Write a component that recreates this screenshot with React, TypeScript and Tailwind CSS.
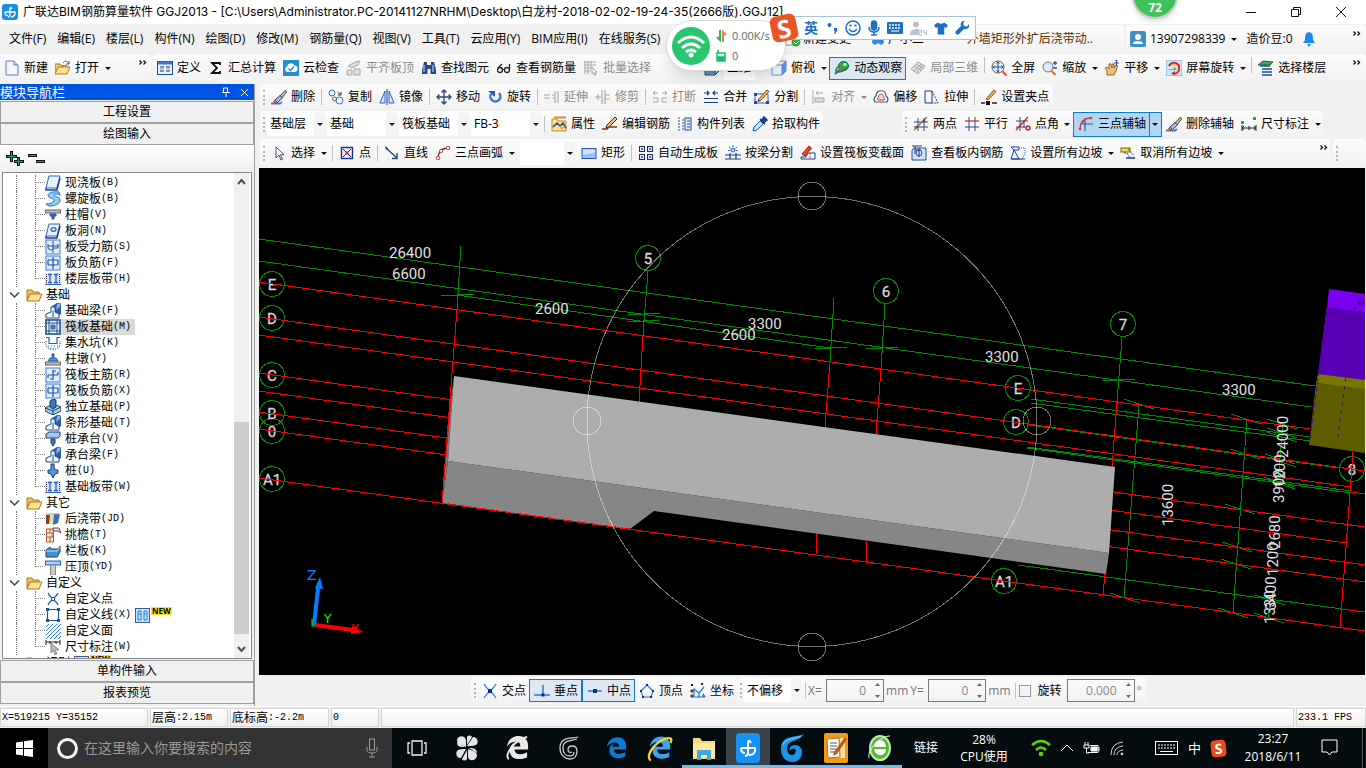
import React, { useState } from "react";
import type { ReactNode } from "react";
import clsx from "clsx";

/* ---------- icons ---------- */

const NAVY = "#1b3f7a";
const BLUE = "#2463c4";
const GREY = "#a8a8a8";

function Svg({ children, size = 16 }: { children: ReactNode; size?: number }) {
    return (
        <svg width={size} height={size} viewBox="0 0 16 16" fill="none" className="shrink-0" aria-hidden="true">
            {children}
        </svg>
    );
}

const eraser = (
    <>
        <path d="M0 14.500h9l2-1.500" stroke="#4a7db5" strokeWidth="2" />
        <path d="M14.500 1 9 7l2 2 4.500-6z" fill="#e8c46a" stroke="#3a4a6a" />
        <path d="m9 6.500-5 4.500 2.500 2.500L11.500 9z" fill="#a9bfe0" stroke="#2a3e6e" />
        <path d="m4 11 2.500 2.500-2.500.5-1.500-1z" fill="#e88" stroke="#a33" />
    </>
);

const rebarBox = (
    <>
        <rect x="1" y="1" width="14" height="14" fill="#e3eefc" stroke="#3a78d0" />
        <path d="M8 2v12M3 5h10M3 10h10M3 5v5M13 5v5" stroke="#1c50a8" strokeWidth="1.200" />
    </>
);

const beam = (
    <>
        <path d="M7 3 12 0h4v11l-4 3z" fill="#2c5e98" />
        <path d="M12 1 16 0 15 4l-4 3z" fill="#7db4e6" />
        <path d="M6 4h4v5l4 2v4H1v-4l5-2z" fill="#f2f8ff" stroke="#1d4f88" />
        <path d="M8 8v6" stroke="#1d4f88" />
    </>
);

const strip = (
    <>
        <rect y="2" width="16" height="11" fill="#dbe8fb" />
        <path d="M0 13.500h16" stroke="#2460c8" />
        <path d="M1.500 3v9M14.500 3v9" stroke="#223" strokeDasharray="1 1" />
        <path d="M3 3.500h4M9 3.500h4M5 3.500v8M11 3.500v8M3 11.500h4M9 11.500h4" stroke="#2460c8" strokeWidth="1.300" />
    </>
);

const slab = (
    <>
        <path d="M4 1h11l-3 12H1z" fill="#e7f2ff" stroke="#2c62c0" />
        <path d="M1 13v2h11l3-12" stroke="#1b3f8a" strokeWidth="1.500" />
    </>
);

const ICONS: Record<string, ReactNode> = {
    newFile: <><path d="M2 1h8l4 4v10H2z" fill="#f4f8fe" stroke="#5c7fae" /><path d="M10 1v4h4" fill="#c7d9f0" stroke="#5c7fae" /></>,
    open: <><path d="M0 14V4h5l1 1.500h6V8" fill="#f5c95c" stroke="#a87a22" /><path d="m0 14 3-7h12l-3 7z" fill="#ffe08a" stroke="#a87a22" /><path d="M8 3c2-3 5-2 6 1M14 1v3h-3" stroke="#3c6fae" /></>,
    define: <><rect x=".5" y="1.500" width="15" height="13" fill="#eaf2fd" stroke="#1c4fa0" /><path d="M1 3h14" stroke="#3b76d0" strokeWidth="3" /><path d="M3 7h4M9 7h4M3 11h4M9 11h4" stroke="#234" /><path d="M3 9h4M9 9h4" stroke="#8ab" /></>,
    sigma: <path d="M12 5V3H4l5 5-5 5h8v-2" stroke="#111" strokeWidth="1.800" />,
    cloud: <><rect width="16" height="16" fill="#1f8fd6" /><path d="M4 12a3 3 0 0 1 0-5.500 4 4 0 0 1 7.500-1A3.300 3.300 0 0 1 12 12z" fill="#fff" /><path d="m5.500 8.500 2 2 3.500-4" stroke="#1f8fd6" strokeWidth="1.500" /></>,
    alignTop: <><path d="M2 6 9 2l5-1-2 4-6 3zM1 10h5v5H1zM8 9h6v6H8z" fill="#ddd" stroke={GREY} /></>,
    find: <><path d="M3 2h3v3h4V2h3l2 8v4H9.500V9h-3v5H1v-4z" fill="#274a86" /><path d="M3 5v7M12 5v7" stroke="#8fb2e6" strokeWidth="1.500" /></>,
    glasses: <><circle cx="4" cy="10" r="2.500" stroke="#222" strokeWidth="1.300" /><circle cx="11" cy="10" r="2.500" stroke="#222" strokeWidth="1.300" /><path d="M6.500 9.500h2M2 8l4-4M13.500 10V4" stroke="#222" strokeWidth="1.200" /></>,
    batch: <><path d="M1 2h12M1 5h12M1 8h7M1 11h7M2 1v13M5 1v13M8 1v8" stroke={GREY} /><path d="m9 7 5 5-2 .3 1 2.500-1.500.5-1-2.500L9 14z" fill="#eee" stroke={GREY} /></>,
    cube: <><path d="m1 5 4-4h10v10l-4 4H1z" fill="#8db4e2" stroke={NAVY} /><path d="M1 5h10v10M11 5l4-4" stroke={NAVY} /><path d="M2 6h8v8H2z" fill="#5c8fd0" /></>,
    cubeTop: <><path d="m1 5 4-4h10v10l-4 4H1z" fill="#f0f6ff" stroke="#6b8cbd" /><path d="M1 5h10v10M11 5l4-4" stroke="#6b8cbd" /><path d="M11 5 15 1v10l-4 4z" fill="#5b93dc" /></>,
    orbit: <><ellipse cx="9.500" cy="6" rx="5" ry="4.500" fill="#2fa84f" stroke="#14692c" /><ellipse cx="11" cy="4.500" rx="2" ry="1.500" fill="#b8f0c2" /><path d="m1 14 4-4" stroke="#2a64c8" strokeWidth="2" /><path d="M5 6c-4 3-4 6-1 6s6-1 9-4" stroke="#1b7d36" strokeWidth="1.500" /><path d="m4 9 2-1 2 2-2 2z" fill="#e8432c" /></>,
    partial: <><path d="m1 9 7-7 7 4-7 8z" fill="#e2e2e2" stroke={GREY} /><path d="m4 6 7 4M6 4l7 4M4 11l7-7M6 13l7-8" stroke={GREY} /></>,
    full: <><circle cx="7" cy="7" r="6" fill="#e8f0fa" stroke="#555" /><path d="M7 2v10M2 7h10M5.500 3.500 7 2l1.500 1.500M5.500 10.500 7 12l1.500-1.500M3.500 5.500 2 7l1.500 1.500M10.500 5.500 12 7l-1.500 1.500" stroke="#2050a0" /><path d="m11.500 11.500 4 4" stroke="#c85a1c" strokeWidth="2" /></>,
    zoom: <><circle cx="6" cy="7" r="5" fill="#dcebfa" stroke="#777" /><path d="m9.500 11 4 4" stroke="#d8741c" strokeWidth="2" /><path d="M13 1v4M11 3h4M11 8h4" stroke="#2456a8" strokeWidth="1.300" /></>,
    pan: <><path d="M3 15V11L1 8l2-1 2 2V4l1.500-.5L8 8V4h2v4l2-3 1.500 1-1.500 5-2 4z" fill="#e9c078" stroke="#94682a" /><path d="M12.500 0v6M10 3h5M11.500 1l1-1 1 1M11.500 5l1 1 1-1" stroke="#234f96" /></>,
    rotateScreen: <><rect width="16" height="16" fill="#cfe6fa" stroke="#67aee0" /><path d="M3 6a5.500 5.500 0 0 1 10 0v4a5 5 0 0 1-6 3.500" stroke="#e0281c" strokeWidth="2" /><path d="m9 11-4 2.500 4 2z" fill="#e0281c" /><path d="M3 9h4l2-2 2 3H3z" fill="#78b83c" /><circle cx="8" cy="5" r="1.500" fill="#f5d23c" /></>,
    floors: <><path d="M4 3h10M2 6h10M4 9h10M4 12h10M4 15h10" stroke="#1a4f94" strokeWidth="1.500" /><path d="m0 5 5-4 10 1-3 3z" fill="#3fa65a" stroke="#1d6a34" /></>,
    eraser,
    copy: <><circle cx="4" cy="4" r="3" fill="#eef4fb" stroke="#4a6d9a" /><circle cx="11.500" cy="11.500" r="3.500" fill="#eef4fb" stroke="#4a6d9a" /><path d="m9.500 3 3.500 3M13 3v3h-3" stroke="#234" /><circle cx="6.500" cy="10" r="2" stroke="#4a6d9a" /></>,
    mirror: <><path d="M6 2v12H1zM10 2v12h5z" fill="#dfeaf9" stroke={BLUE} /><path d="M8 0v16" stroke={NAVY} /></>,
    move: <path d="M8 1v14M1 8h14M5.500 3.500 8 1l2.500 2.500M5.500 12.500 8 15l2.500-2.500M3.500 5.500 1 8l2.500 2.500M12.500 5.500 15 8l-2.500 2.500" stroke="#27496f" strokeWidth="1.300" />,
    rotate: <><path d="M4 5a5 5 0 1 0 8-1" stroke="#3b78cf" strokeWidth="2.500" /><path d="M1 2h7v6z" fill="#2a5cae" /></>,
    extend: <path d="M0 6h6M0 9h6M8 6h2M8 9h2M11 2v12M14 2v12" stroke={GREY} strokeWidth="1.200" />,
    trim: <path d="M0 8h6M10 6h5M10 10h5M7 1v14M10 1v14M3 5v6" stroke={GREY} strokeWidth="1.200" />,
    breakIt: <path d="M6 4H1M3 2 1 4l2 2M10 4h5M13 2l2 2-2 2M1 9h5v4H1M15 9h-5v4h5" stroke={GREY} />,
    merge: <><path d="M1 4h5M4 2l2 2-2 2M15 4h-5M12 2l-2 2 2 2" stroke="#1b3f7a" strokeWidth="1.200" /><path d="M1 9.500h14M1 13.500h14" stroke="#1b3f7a" /></>,
    split: <><path d="M1 5h13v9H1z" stroke="#2a5cc8" /><path d="M0 4h3v3H0zM0 12h3v3H0zM12 12h3v3h-3z" fill="#1c46b0" /><path d="m4 11 9-10 2 1.500L6 12z" fill="#f2c258" stroke="#7a4a14" /><path d="m4 11-.5 2L6 12" fill="#222" /></>,
    align: <><path d="M2 1v14M4 9h9v4H4z" stroke={GREY} fill="#ddd" /><path d="M12 4H5M7 2 5 4l2 2" stroke={GREY} /></>,
    offset: <><path d="M2 13a4 4 0 0 1 1-6c0-7 10-7 10 0a4 4 0 0 1 1 6z" fill="#fff" stroke="#3b587f" strokeWidth="1.200" /><path d="M5 11a2 2 0 0 1 .5-3c0-4 5-4 5 0a2 2 0 0 1 .5 3z" fill="#fcd7d7" stroke="#c93c3c" /></>,
    stretch: <><path d="M1 2h7v12H1z" stroke="#1b3f7a" /><path d="m8 2 6 12H8" stroke="#27496f" strokeDasharray="2 1" /></>,
    grip: <><path d="M0 14h4M11 14h5" stroke="#222" strokeWidth="1.500" /><rect x="5" y="12" width="4" height="4" fill="#111" /><path d="m5 10 8-9 2 1.500L7 11z" fill="#e8b64c" stroke="#7a5a14" /></>,
    props: <><path d="M1 3h5l1 2h8v10H1z" fill="#fbe09a" stroke="#c48a2a" /><path d="M3 1.500h12" stroke="#e08a2a" strokeWidth="2" /><path d="m2 11 4-4 3 3 3-3 3 5" stroke="#31507c" strokeWidth="1.500" /><path d="m8 10 5 1-2 3z" fill="#e6a038" /></>,
    editBar: <><path d="M0 13h5l2-2h8" stroke="#7a3a10" strokeWidth="1.500" /><path d="m5 9 8-8 2 2-8 8-3 1z" fill="#e6c27a" stroke="#333" /></>,
    list: <><path d="M1 2h3M1 5h3M1 8h3M1 11h3M1 14h3M6 3v11" stroke="#24508e" strokeDasharray="2 1" /><rect x="8" y="2" width="6" height="12" fill="#e8f0fb" stroke="#24508e" /><path d="M10 5h3M10 8h3M10 11h3" stroke="#24508e" /></>,
    picker: <><path d="m1 15 1-4 7-7 3 3-7 7z" fill="#bfe0f7" stroke="#275fae" /><path d="m8 3 5 5M9 5l3-4 3 3-4 3z" stroke="#123a7a" fill="#1d4f9e" strokeWidth="1.500" /></>,
    twoPoint: <><path d="M5 2v13M11 2v13M1 6h14M1 11h14" stroke="#2c4f86" /><path d="M1 14 14 1" stroke="#2f9a3f" strokeWidth="1.300" /><circle cx="4" cy="11" r="1.500" fill="#c22" /><circle cx="11" cy="5" r="1.500" fill="#c22" /></>,
    parallel: <><path d="M5 1v14M11 1v14" stroke="#2c4f86" /><path d="M1 5h14" stroke="#c33" strokeWidth="1.300" /><path d="M1 11h14" stroke="#2c4f86" /></>,
    pointAngle: <><path d="M5 1v14M9 4v8M1 5h12M1 11h9" stroke="#2c4f86" /><path d="M1 14 13 1" stroke="#c22" strokeWidth="1.300" /><circle cx="13" cy="12" r="2" stroke="#c22" strokeWidth="1.500" /></>,
    threeAxis: <><path d="M7 2v13M2 8h13" stroke="#34619e" strokeWidth="1.200" /><path d="M2 14C2 6 6 2 13 2" stroke="#d63a3a" strokeWidth="1.300" /><circle cx="2" cy="13" r="1.300" fill="#d63a3a" /><circle cx="5" cy="5.500" r="1.300" fill="#d63a3a" /><circle cx="13" cy="2" r="1.300" fill="#d63a3a" /></>,
    dim: <><path d="M1 9v6M15 9v6M1 12h14M3 10l-2 2 2 2M13 10l2 2-2 2M8 10v4" stroke="#222" /><rect x="0" y="5" width="3" height="3" fill="#3a9a4a" /><rect x="12" y="1" width="3" height="3" fill="#3a9a4a" /></>,
    select: <path d="M5 2v11l3-3 2 5 1.500-.7-2-4.600H13z" fill="#fff" stroke="#3e556e" />,
    point: <><rect x="2.500" y="2.500" width="11" height="11" stroke="#1b2f8a" strokeWidth="1.400" fill="#eef2ff" /><path d="m4 4 8 8M12 4l-8 8" stroke="#1b2f8a" /><circle cx="8" cy="8" r="1.700" fill="#d33" /></>,
    line: <><path d="m2 3 11 10" stroke="#27496f" strokeWidth="1.400" /><path d="M13 8v5.500H8" stroke="#27496f" strokeWidth="1.400" /><path d="m1 1 3 2-2 2z" fill="#27496f" /></>,
    arc: <><path d="M3 14C3 7 7 3 13 3" stroke="#27496f" strokeWidth="1.400" /><circle cx="3" cy="13" r="1.800" stroke="#d03a2a" fill="#fff" /><circle cx="6" cy="6" r="1.600" stroke="#d03a2a" fill="#fff" /><circle cx="13" cy="3" r="1.800" stroke="#d03a2a" fill="#fff" /></>,
    rect: <><rect x="1" y="3.500" width="14" height="10" fill="#9dc2fa" stroke="#2a55c0" /><path d="M2 4.500h12v3L2 10z" fill="#d3e5ff" /></>,
    autoSlab: <g stroke="#222b52" fill="#dfe9fb"><rect x="1.500" y="1.500" width="5" height="5" /><rect x="9.500" y="1.500" width="5" height="5" /><rect x="1.500" y="9.500" width="5" height="5" /><rect x="9.500" y="9.500" width="5" height="5" /><path d="M4 3v2M12 3v2M4 11v2M12 11v2" stroke="#3b78e0" strokeWidth="2" /></g>,
    beamSplit: <><path d="M0 10h5M11 10h5M0 14h16M5 8v6M11 8v6M5 10h6" stroke="#1b3f8a" strokeWidth="1.200" /><circle cx="8" cy="5" r="2" fill="#bcd4f7" stroke={BLUE} /><path d="M8 0v2M4 2l1.500 1M12 2l-1.500 1M3 5.500h2M11 5.500h2" stroke={BLUE} /></>,
    varSection: <><path d="M1 12h5l2-4h7v6H1z" stroke="#1b3f8a" fill="#fff" /><path d="m2 9 7-8 2.500 2L5 11z" fill="#e8432c" stroke="#a3200f" /><path d="M10 8v6" stroke="#d33" strokeDasharray="2 1" /></>,
    viewSlab: <><path d="M3 3h12v12H1V5z" fill="#cfe2fb" stroke="#27508e" /><path d="M1 1h10M4 1v8M4 5h6M8 3v9" stroke="#1b3f7a" /><circle cx="8" cy="8" r="3" stroke="#27508e" /></>,
    setSlope: <><path d="M1 2h8v3H4l5 9H1l3-9z" fill="#f3f8ff" stroke="#1b3fa0" /><path d="M9 3h6v6l-3 5H7" stroke="#2a62c8" strokeDasharray="1 1" /><path d="M1 14h14" stroke="#1b3fa0" /></>,
    clearSlope: <><rect x="1" y="3" width="9" height="4" fill="#f7e04a" stroke="#6e5f14" /><path d="M4 8h3l3 5h5M8 4l6 7" stroke="#27508e" strokeDasharray="2 1" /><path d="M6 13h9" stroke="#1b3fa0" strokeWidth="1.500" /></>,
    cross: <><path d="M2 1c3 6 9 8 12 14M14 1C11 7 5 9 2 15" stroke="#2a78d8" strokeWidth="1.200" /><rect x="6" y="6" width="4" height="4" fill="#0b2f7a" /></>,
    foot: <><path d="M9 2v11" stroke="#2a78d8" strokeWidth="1.500" /><path d="M0 12h16" stroke="#2a78d8" strokeWidth="1.500" /><rect x="7.500" y="10.500" width="3" height="3" fill="#0b2f7a" /></>,
    mid: <><path d="M1 8h14" stroke="#2a78d8" strokeWidth="1.500" /><rect x="6" y="6" width="4" height="4" fill="#0b2f7a" /></>,
    vertex: <><path d="M8 2 14 8l-2 6H4L2 8z" stroke="#2a78d8" strokeWidth="1.200" /><path d="M7 1h2v2H7zM1 7h2v2H1zM13 7h2v2h-2zM3 13h2v2H3zM11 13h2v2h-2z" fill="#0b2f7a" /></>,
    coord: <><path d="M4 5v9h11M4 6l5 4M14 4l-5 6v5" stroke="#2a78d8" strokeWidth="1.200" /><path d="m1 1 2 2M3 1 1 3M11 0l2 2M13 0l-2 2M1 7h2v2H1zM1 12h2v2H1z" stroke="#222" /><path d="m13 10 3 4h-4z" fill="#2a78d8" /></>,

    // tree
    slab,
    spiral: <><path d="M14 1C6 0 1 3 4 6c2 2 6 1 5 4-1 2-5 3-8 3l3 2c6 0 11-2 11-6 0-4-7-3-6-5 .5-1.500 4-1 6 0z" fill="#8fd0f5" stroke="#2470b8" /></>,
    cap: <><rect x=".5" y="3" width="15" height="3" fill="#bbb" stroke="#666" /><path d="M5 7h6v2H5zM7 9h2v3H7z" fill="#4c86d8" stroke="#1c4fa0" /></>,
    hole: <>{slab}<ellipse cx="8.500" cy="6.500" rx="2.500" ry="1.800" stroke="#2c62c0" strokeWidth="1.300" /></>,
    force: <><rect x="1" y="1" width="14" height="14" fill="#e3eefc" stroke="#3a78d0" /><path d="M8 2v12M3 7h10M3 5v4a3 3 0 0 0 5 1M13 5v4H8" stroke="#1c50a8" /></>,
    rebarBox,
    strip,
    beam,
    raft: <><rect x="1" y="1" width="14" height="14" fill="#eef6ff" stroke="#1d4f88" strokeWidth="1.500" /><path d="M4 1v14M12 1v14M1 4h14M1 12h14M6 6h4v4H6zM8 6v4M6 8h4" stroke="#1d4f88" /></>,
    pit: <><path d="M1 2.500h3v6h8v-6h3" stroke={BLUE} strokeWidth="1.200" /><path d="M1 6v4c2 6 12 6 14 0V6" stroke={BLUE} strokeDasharray="1 1.500" strokeWidth="1.300" /><path d="M3 11h10M5 13h6" stroke={BLUE} strokeDasharray="1 2" /></>,
    pier: <><path d="M7 3h2v3H7zM5 7h6l2 3H3z" fill="#5b93dc" stroke="#1c4fa0" /><rect x=".5" y="11" width="15" height="3" fill="#bbb" stroke="#666" /></>,
    mainBar: <><rect x="1" y="1" width="14" height="14" fill="#e3eefc" stroke="#3a78d0" /><path d="M8 3v10M3 8h10M3 8v3M13 8V5M5 12h3M8 4h3" stroke="#1c50a8" strokeWidth="1.200" /></>,
    isolated: <><path d="m0 9 8-4 8 3v4l-8 4-8-4z" fill="#a7cdf0" stroke="#143f74" /><path d="m0 9 8 3 8-4M8 12v4" stroke="#143f74" /><path d="M5 2 8 0l3 1v7l-3 2-3-2z" fill="#3e77b8" stroke="#143f74" /></>,
    cushion: <><path d="m1 3 3-2h11v4l-2 2H1z" fill="#9fc8ee" stroke="#143f74" /><path d="M6 8h4v4l-2 3-2-3z" fill="#3e77b8" stroke="#143f74" /></>,
    pile: <path d="M6 1h3v3l1 3h3v3l-3 1-2 4-2-4-3-1V7h3z" fill="#5b93dc" stroke="#143f74" />,
    postCast: <><path d="M1 4h5v9H1z" fill="#7a4520" /><path d="M5 4h5l-2 9H4z" fill="#f0d8a8" /><path d="M9 3h6l-2 9-5 2z" fill="#3a6ec4" /><path d="M1 3h13" stroke="#999" /></>,
    eave: <><path d="M1.500 2h7v13h-7zM2 6h7M2 10h7M5 2v4M7 6v4M5 10v5" stroke="#b8582c" fill="#fdebdc" /><path d="M8 1h6l2 5-3-2H8z" fill="#ddd" stroke="#6a4a3a" /></>,
    rail: <><path d="m1 7 4-3 1 2h7l2-3v6l-3 5H1z" fill="#4c8fd0" stroke="#143f74" /><path d="M1 8h11l3-4" stroke="#bfe0f7" /></>,
    coping: <><rect x=".5" y="2" width="15" height="4" fill="#a9ccf5" stroke="#2463c4" /><rect x="5.500" y="6" width="5" height="10" fill="#ccc" stroke="#888" /></>,
    userPoint: <><path d="M3 2c2 5 8 7 10 12M13 2C11 7 5 9 3 14" stroke="#1c50a8" strokeWidth="1.200" /><rect x="6.500" y="6.500" width="3" height="3" fill="#fff" stroke="#1c50a8" /></>,
    userLine: <><rect x="2.500" y="2.500" width="11" height="11" stroke="#1c50a8" /><path d="M1 1h3v3H1zM12 1h3v3h-3zM1 12h3v3H1zM12 12h3v3h-3z" fill="#1c50a8" /></>,
    userFace: <path d="m1 4 3-3M1 8l7-7M1 12 12 1M1 16 16 1M5 16 16 5M9 16l7-7M13 16l3-3" stroke="#3b78e0" />,
    userDim: <><path d="M1 1v5M15 1v5M1 3h14M5 2v3M11 2v3" stroke="#222" /><path d="M6 4v10l2.500-2.500L10 16l2-1-2-4h4z" fill="#bbb" stroke="#888" /></>,
    folder: <><path d="M1 14V3h5l1 2h6v3" fill="#f0c25a" stroke="#a87a22" /><path d="m1 14 3-7h12l-3 7z" fill="#ffe39a" stroke="#a87a22" /></>,
};

const Icon = ({ name }: { name: string }) => <Svg>{ICONS[name]}</Svg>;

const Caret = ({ muted }: { muted?: boolean }) => (
    <svg width="6" height="3" viewBox="0 0 6 3" aria-hidden="true">
        <path d="M0 0h6L3 3z" fill={muted ? "#888" : "#111"} />
    </svg>
);

/* ---------- toolbar parts ---------- */

type ToolItem = { icon: string; label: string; arrow?: boolean; off?: boolean; on?: boolean };

function Tool({ icon, label, arrow, off, on }: ToolItem) {
    return (
        <button
            type="button"
            disabled={off}
            className={clsx(
                "flex h-[23px] shrink-0 items-center whitespace-nowrap",
                on && "border border-[#1079d0] bg-[#dce9f5]",
                off && "text-[#8c8c8c]"
            )}
        >
            <span className="flex items-center gap-1 pl-1 pr-[3px]">
                <Icon name={icon} />
                {label}
            </span>
            {arrow && (
                <span className="flex w-[11px] justify-center">
                    <Caret muted={off} />
                </span>
            )}
        </button>
    );
}

const Sep = () => (
    <span className="flex w-[6px] shrink-0 justify-center">
        <span className="h-4 w-px bg-[#c0c0c0]" />
    </span>
);

const Grip = () => <span className="mr-[2px] ml-[3px] h-[15px] shrink-0 border-l-2 border-dotted border-[#b4b4b4]" />;

function Tools({ items }: { items: (ToolItem | "|")[] }) {
    return <>{items.map((it, i) => (it === "|" ? <Sep key={i} /> : <Tool key={i} {...it} />))}</>;
}

function Band({ children, className }: { children?: ReactNode; className?: string }) {
    return (
        <div className={clsx("flex items-center rounded-sm bg-linear-to-b from-[#fcfcfc] to-[#f1f1f1]", className)}>
            {children}
        </div>
    );
}

function Combo({ label, value, className }: { label: string; value: string; className: string }) {
    return (
        <span className={clsx("relative flex h-[23px] shrink-0 bg-white", className)}>
            <select aria-label={label} defaultValue={value} className="w-full appearance-none bg-transparent pl-[3px] outline-none">
                <option>{value}</option>
            </select>
            <span className="pointer-events-none absolute inset-y-0 right-0 flex w-[11px] items-center justify-center bg-[#f4f4f4]">
                <Caret />
            </span>
        </span>
    );
}

function More() {
    return (
        <button type="button" aria-label="更多" className="flex h-4 w-3 shrink-0 items-center justify-center self-start">
            <svg width="8" height="5" viewBox="0 0 8 5" fill="none">
                <path d="m.5.5 2 2-2 2M4.500.5l2 2-2 2" stroke="#111" strokeWidth="1.300" />
            </svg>
        </button>
    );
}

const MENUS = ["文件(F)", "编辑(E)", "楼层(L)", "构件(N)", "绘图(D)", "修改(M)", "钢筋量(Q)", "视图(V)", "工具(T)", "云应用(Y)", "BIM应用(I)", "在线服务(S)"];

const MAIN_TOOLS: (ToolItem | "|")[] = [
    { icon: "define", label: "定义" },
    { icon: "sigma", label: "汇总计算" },
    { icon: "cloud", label: "云检查" },
    { icon: "alignTop", label: "平齐板顶", off: true },
    { icon: "find", label: "查找图元" },
    { icon: "glasses", label: "查看钢筋量" },
    { icon: "batch", label: "批量选择", off: true },
];

const VIEW_TOOLS: (ToolItem | "|")[] = [
    { icon: "cubeTop", label: "俯视", arrow: true },
    { icon: "orbit", label: "动态观察", on: true },
    { icon: "partial", label: "局部三维", off: true },
    "|",
    { icon: "full", label: "全屏" },
    { icon: "zoom", label: "缩放", arrow: true },
    { icon: "pan", label: "平移", arrow: true },
    { icon: "rotateScreen", label: "屏幕旋转", arrow: true },
    "|",
    { icon: "floors", label: "选择楼层" },
];

const EDIT_TOOLS: (ToolItem | "|")[] = [
    { icon: "eraser", label: "删除" },
    "|",
    { icon: "copy", label: "复制" },
    { icon: "mirror", label: "镜像" },
    "|",
    { icon: "move", label: "移动" },
    { icon: "rotate", label: "旋转" },
    "|",
    { icon: "extend", label: "延伸", off: true },
    { icon: "trim", label: "修剪", off: true },
    "|",
    { icon: "breakIt", label: "打断", off: true },
    { icon: "merge", label: "合并" },
    { icon: "split", label: "分割" },
    "|",
    { icon: "align", label: "对齐", arrow: true, off: true },
    { icon: "offset", label: "偏移" },
    { icon: "stretch", label: "拉伸" },
    "|",
    { icon: "grip", label: "设置夹点" },
];

const COMPONENT_TOOLS: (ToolItem | "|")[] = [
    { icon: "props", label: "属性" },
    { icon: "editBar", label: "编辑钢筋" },
    { icon: "list", label: "构件列表" },
    { icon: "picker", label: "拾取构件" },
];

const DRAW_TOOLS: (ToolItem | "|")[] = [
    { icon: "select", label: "选择", arrow: true },
    "|",
    { icon: "point", label: "点" },
    "|",
    { icon: "line", label: "直线" },
    { icon: "arc", label: "三点画弧", arrow: true },
];

const SLAB_TOOLS: (ToolItem | "|")[] = [
    { icon: "rect", label: "矩形" },
    "|",
    { icon: "autoSlab", label: "自动生成板" },
    { icon: "beamSplit", label: "按梁分割" },
    { icon: "varSection", label: "设置筏板变截面" },
    { icon: "viewSlab", label: "查看板内钢筋" },
    { icon: "setSlope", label: "设置所有边坡", arrow: true },
    { icon: "clearSlope", label: "取消所有边坡", arrow: true },
];

/* ---------- left navigation ---------- */

type Leaf = { icon: string; name: string; hotkey?: string; isNew?: boolean };
type Group = { name?: string; items: Leaf[] };

const TREE: Group[] = [
    {
        items: [
            { icon: "slab", name: "现浇板", hotkey: "(B)" },
            { icon: "spiral", name: "螺旋板", hotkey: "(B)" },
            { icon: "cap", name: "柱帽", hotkey: "(V)" },
            { icon: "hole", name: "板洞", hotkey: "(N)" },
            { icon: "force", name: "板受力筋", hotkey: "(S)" },
            { icon: "rebarBox", name: "板负筋", hotkey: "(F)" },
            { icon: "strip", name: "楼层板带", hotkey: "(H)" },
        ],
    },
    {
        name: "基础",
        items: [
            { icon: "beam", name: "基础梁", hotkey: "(F)" },
            { icon: "raft", name: "筏板基础", hotkey: "(M)" },
            { icon: "pit", name: "集水坑", hotkey: "(K)" },
            { icon: "pier", name: "柱墩", hotkey: "(Y)" },
            { icon: "mainBar", name: "筏板主筋", hotkey: "(R)" },
            { icon: "rebarBox", name: "筏板负筋", hotkey: "(X)" },
            { icon: "isolated", name: "独立基础", hotkey: "(P)" },
            { icon: "beam", name: "条形基础", hotkey: "(T)" },
            { icon: "cushion", name: "桩承台", hotkey: "(V)" },
            { icon: "beam", name: "承台梁", hotkey: "(F)" },
            { icon: "pile", name: "桩", hotkey: "(U)" },
            { icon: "strip", name: "基础板带", hotkey: "(W)" },
        ],
    },
    {
        name: "其它",
        items: [
            { icon: "postCast", name: "后浇带", hotkey: "(JD)" },
            { icon: "eave", name: "挑檐", hotkey: "(T)" },
            { icon: "rail", name: "栏板", hotkey: "(K)" },
            { icon: "coping", name: "压顶", hotkey: "(YD)" },
        ],
    },
    {
        name: "自定义",
        items: [
            { icon: "userPoint", name: "自定义点" },
            { icon: "userLine", name: "自定义线", hotkey: "(X)", isNew: true },
            { icon: "userFace", name: "自定义面" },
            { icon: "userDim", name: "尺寸标注", hotkey: "(W)" },
        ],
    },
];

const NewBadge = () => (
    <>
        <svg width="15" height="15" viewBox="0 0 15 15" fill="none" className="shrink-0">
            <rect x=".5" y=".5" width="14" height="14" fill="#cde4fb" stroke="#3f5f86" />
            <path d="M3 3h3v9H3zM9 3h3v9H9zM3 6h3M9 6h3" stroke="#1f7ad8" />
        </svg>
        <span className="mb-2 ml-px bg-[#ffe11a] px-px text-[8px] font-bold leading-[8px] text-black">NEW</span>
    </>
);

function TreeLeaf({ leaf, last, active, onPick }: { leaf: Leaf; last: boolean; active: boolean; onPick: () => void }) {
    return (
        <li className="flex h-4 items-center pl-[13px]">
            <span className="h-4 w-[19px] border-l border-dotted border-[#808080]" />
            <span className={clsx("flex w-[10px] items-start border-l border-dotted border-[#808080]", last ? "h-2 self-start" : "h-4")}>
                <span className="h-2 w-full border-b border-dotted border-[#808080]" />
            </span>
            <button type="button" onClick={onPick} className={clsx("flex h-4 items-center pr-1", active && "bg-[#d9d9d9]")}>
                <Icon name={leaf.icon} />
                <span className="ml-1">{leaf.name}</span>
                {leaf.hotkey && <span className="font-['Liberation_Mono'] text-[10px]">{leaf.hotkey}</span>}
            </button>
            {leaf.isNew && <NewBadge />}
        </li>
    );
}

function FolderRow({ name, isNew }: { name: string; isNew?: boolean }) {
    return (
        <div className="flex h-4 items-center pl-[6px]">
            <svg width="11" height="8" viewBox="0 0 11 8" fill="none">
                <path d="m1 1.500 4.500 4.500L10 1.500" stroke="#404040" strokeWidth="1.500" />
            </svg>
            <span className="w-[6px]" />
            <Icon name="folder" />
            <span className="ml-1">{name}</span>
            {isNew && <span className="flex items-center pl-1"><NewBadge /></span>}
        </div>
    );
}

const PanelButton = ({ children }: { children: ReactNode }) => (
    <button type="button" className="block h-[22px] w-full border border-[#a0a0a0] bg-[#f0f0f0] text-center">
        {children}
    </button>
);

function NavPanel() {
    const [active, setActive] = useState("筏板基础");
    return (
        <aside className="flex w-[255px] shrink-0 flex-col border-r border-[#a0a0a0] bg-[#f0f0f0]">
            <div className="flex h-4 shrink-0 items-center bg-[#0054e3] text-white">
                <span className="flex-1 text-[13px] leading-4">模块导航栏</span>
                <button type="button" aria-label="固定" className="mr-[9px]">
                    <svg width="10" height="10" viewBox="0 0 10 10" fill="none" stroke="#fff">
                        <path d="M2.500 5.500V1h4v4.500M1 5.500h8M5 6v4M6.500 1v4.500" />
                    </svg>
                </button>
                <button type="button" aria-label="关闭" className="mr-[5px]">
                    <svg width="9" height="9" viewBox="0 0 9 9" stroke="#fff"><path d="m1 1 7 7M8 1 1 8" /></svg>
                </button>
            </div>
            <div className="pt-px">
                <PanelButton>工程设置</PanelButton>
                <PanelButton>绘图输入</PanelButton>
            </div>
            <div className="flex h-[27px] shrink-0 items-center gap-1 bg-linear-to-b from-white to-[#f0f0f0] pl-[6px]">
                <button type="button" aria-label="全部展开">
                    <svg width="18" height="15" viewBox="0 0 18 15">
                        <path d="M4 0h3v4h4v3H7v4H4V7H0V4h4zM11 6h3v3h4v3h-4v3h-3v-3H8V9h3z" fill="#111" />
                        <path d="M5 1h1v9H5zM1 5h9v1H1zM12 7h1v7h-1zM9 10h8v1H9z" fill="#17a67e" />
                    </svg>
                </button>
                <button type="button" aria-label="全部折叠">
                    <svg width="17" height="15" viewBox="0 0 17 15">
                        <path d="M0 3h9v3H0zM8 9h9v3H8z" fill="#111" />
                        <path d="M1 4h7v1H1zM9 10h7v1H9z" fill="#17a67e" />
                    </svg>
                </button>
            </div>
            <div className="mx-[2px] flex min-h-0 grow basis-[487px] overflow-hidden border border-[#828790] bg-white pr-[2px]">
                <div className="h-0 min-h-full flex-1 overflow-hidden pt-[2px]">
                    {TREE.map((g, gi) => (
                        <section key={gi}>
                            {g.name && <FolderRow name={g.name} />}
                            <ul>
                                {g.items.map((leaf, i) => (
                                    <TreeLeaf
                                        key={leaf.name}
                                        leaf={leaf}
                                        last={i === g.items.length - 1}
                                        active={active === leaf.name}
                                        onPick={() => setActive(leaf.name)}
                                    />
                                ))}
                            </ul>
                        </section>
                    ))}
                    <FolderRow name="识别" isNew />
                </div>
                <div className="flex w-[15px] flex-col items-center bg-[#f0f0f0]">
                    <svg width="15" height="18" viewBox="0 0 15 18" fill="none"><path d="m4 11 3.500-4 3.500 4" stroke="#505050" strokeWidth="2" /></svg>
                    <span className="flex-[232]" />
                    <span className="w-full flex-[212] bg-[#cdcdcd]" />
                    <svg width="15" height="24" viewBox="0 0 15 24" fill="none"><path d="m4 13 3.500 4 3.500-4" stroke="#505050" strokeWidth="2" /></svg>
                </div>
            </div>
            <div className="shrink-0 pb-[2px] pt-px">
                <PanelButton>单构件输入</PanelButton>
                <PanelButton>报表预览</PanelButton>
            </div>
        </aside>
    );
}

/* ---------- 3D view ---------- */

const GREEN = "#008c00";

const GREEN_LINES = [
    [259, 239, 1315, 386], [259, 261, 1311, 407], [457, 295, 830, 348],
    [461, 246, 457, 309], [648, 271, 643, 335], [834, 298, 830, 361], [885, 304, 881, 369], [1122, 338, 1117, 402],
    [1139, 404, 1124, 598], [1247, 419, 1233, 613], [1283, 425, 1278, 480], [1270, 600, 1268, 618],
    [1031, 399, 1310, 437], [1031, 403, 1310, 441], [1030, 425, 1339, 468],
    [1027, 447, 1351, 491], [1027, 448, 1351, 493], [1018, 565, 1342, 609],
];

const RED_LINES = [
    [259, 282, 1310, 429], [259, 317, 1365, 471], [259, 335, 1351, 487], [259, 373, 1365, 527],
    [259, 391, 1346, 543], [259, 412, 1365, 565], [259, 429, 1365, 582], [259, 478, 1365, 631],
    [457, 309, 442, 503], [643, 335, 639, 402], [830, 361, 825, 428], [881, 369, 876, 435],
    [1117, 402, 1112, 468], [1105, 573, 1103, 595], [1353, 452, 1340, 628],
    [817, 533, 816, 555], [867, 541, 866, 562], [1342, 609, 1365, 612], [1351, 492, 1365, 494],
];

// tick centres of the steep and of the flat dimension strings
const STEEP_TICKS = [
    [1139, 404], [1246, 419], [1245, 454], [1240, 509], [1237, 547], [1236, 564], [1125, 598], [1233, 613],
    [1270, 600], [1269, 618], [1282, 424], [1282, 433], [1282, 437], [1280, 459], [1281, 462], [1279, 482], [1280, 484],
];
const FLAT_TICKS = [[457, 295], [644, 314], [643, 321], [831, 348], [882, 348], [1119, 380]];

const AXIS_MARKS: [number, number, string][] = [
    [272, 284, "E"], [272, 318, "D"], [272, 375, "C"], [272, 413, "B"], [272, 431, "0"], [272, 479, "A1"],
    [648, 258, "5"], [886, 291, "6"], [1123, 324, "7"], [1018, 388, "E"], [1016, 422, "D"], [1004, 581, "A1"], [1352, 469, "8"],
];

const DIMS: [number, number, string][] = [
    [389, 258, "26400"], [392, 279, "6600"], [535, 314, "2600"], [748, 329, "3300"], [722, 340, "2600"],
    [985, 362, "3300"], [1222, 395, "3300"],
];
const SIDE_DIMS: [number, number, string][] = [
    [1173, 526, "13600"], [1288, 458, "24000"], [1284, 503, "3900"], [1285, 488, "1200"],
    [1280, 549, "2680"], [1278, 576, "1200"], [1276, 610, "3400"], [1275, 624, "1330"],
];

function ModelView() {
    return (
        <svg viewBox="259 168 1106 507" preserveAspectRatio="xMidYMid slice" className="h-full w-full bg-black" fontFamily="Roboto, sans-serif" fontSize="15" role="img" aria-label="三维视图">
            <g stroke={GREEN} fill="none" shapeRendering="crispEdges">
                {GREEN_LINES.map(([a, b, c, d], i) => <line key={i} x1={a} y1={b} x2={c} y2={d} />)}
                {STEEP_TICKS.map(([x, y], i) => <line key={i} x1={x - 15} y1={y - 5} x2={x + 15} y2={y + 5} />)}
                {FLAT_TICKS.map(([x, y], i) => <line key={i} x1={x - 16} y1={y + 1} x2={x + 16} y2={y - 1} />)}
                {AXIS_MARKS.map(([x, y], i) => <circle key={i} cx={x} cy={y} r="12.500" />)}
            </g>
            <g fill="#d8d8d8" textAnchor="middle">
                {AXIS_MARKS.map(([x, y, t], i) => <text key={i} x={x} y={y + 6} stroke="#d8d8d8" strokeWidth=".3">{t}</text>)}
            </g>
            <g stroke="#f00" shapeRendering="crispEdges">
                {RED_LINES.map(([a, b, c, d], i) => <line key={i} x1={a} y1={b} x2={c} y2={d} />)}
            </g>

            {/* raft slab */}
            <path d="M454 376 448 461 442 503 451 399z" fill="#777" />
            <path d="m448 461 661 92-3 21-452-63-24 18-188-26z" fill="#868686" />
            <path d="m454 376 661 91-6 86-661-92z" fill="#adadad" />
            <path d="m451 399-9 104 188 26" stroke="#f00" fill="none" strokeDasharray="8 3" shapeRendering="crispEdges" />

            {/* neighbouring block */}
            <path d="m1329 289 36 5v19l-38-5z" fill="#7a00f0" />
            <path d="m1327 307 38 5v69l-47-7z" fill="#5a00b4" />
            <path d="m1318 374 47 6v10l-49-7z" fill="#777700" />
            <path d="m1316 383 49 6v64l-56-8z" fill="#5c5c00" />
            <path d="m1357 299 8 1v6l-8-1z" fill="#5a00b4" />
            <path d="m1355 307-17 130" stroke="#3d0090" strokeDasharray="3 5" />
            <path d="m1327 307-17 135" stroke="#5a00b4" strokeDasharray="5 3" />

            <g fill="#e0e0e0">
                {DIMS.map(([x, y, t], i) => <text key={i} x={x} y={y}>{t}</text>)}
                {SIDE_DIMS.map(([x, y, t], i) => <text key={i} transform={`translate(${x} ${y}) rotate(-90)`}>{t}</text>)}
            </g>

            {/* orbit ring */}
            <g stroke="#fff" strokeOpacity=".45" fill="none" shapeRendering="crispEdges">
                <circle cx="812" cy="421.500" r="225" />
                <circle cx="812" cy="196" r="14" />
                <circle cx="587" cy="421" r="14" />
                <circle cx="1037" cy="421" r="14" />
                <circle cx="812" cy="647" r="14" />
            </g>

            {/* axis tripod */}
            <path d="m314 625 4-37" stroke="#0080ff" strokeWidth="4" />
            <path d="m320 577 3 12-8-1z" fill="#0080ff" />
            <path d="m315 625 38 5" stroke="#f00" strokeWidth="4" />
            <path d="m363 632-11-6-1 8z" fill="#f00" />
            <path d="M312 619v7h3" stroke="#0f0" fill="none" />
            <g fontFamily="'DejaVu Sans', sans-serif" fontSize="14">
                <text x="307" y="580" fill="#0080ff">Z</text>
                <text x="324" y="623" fill="#0f0" fontSize="12">Y</text>
                <text x="351" y="633" fill="#f00" fontSize="12">X</text>
            </g>
        </svg>
    );
}

/* ---------- snap bar ---------- */

function Spin({ id, value, className }: { id: string; value: string; className: string }) {
    return (
        <span className={clsx("relative flex h-[23px] border border-[#7a7a7a]", className)}>
            <input id={id} defaultValue={value} className="w-full bg-transparent pr-[17px] text-right text-[#8a8a8a] outline-none" />
            <svg width="7" height="17" viewBox="0 0 7 17" className="absolute right-[2px] top-[2px]" fill="#666">
                <path d="M1 4h5L3.500 1zM1 13h5l-2.500 3z" />
            </svg>
        </span>
    );
}

function SnapBar() {
    return (
        <div className="flex h-[31px] shrink-0 items-center pl-[212px] text-[#777]">
            <Band className="h-7 text-black">
                <Grip />
                <Tools
                    items={[
                        { icon: "cross", label: "交点" },
                        { icon: "foot", label: "垂点", on: true },
                        { icon: "mid", label: "中点", on: true },
                        { icon: "vertex", label: "顶点" },
                        { icon: "coord", label: "坐标" },
                    ]}
                />
            </Band>
            <Band className="h-7">
                <Grip />
                <span className="text-black"><Combo label="偏移方式" value="不偏移" className="w-[58px]" /></span>
                <Sep />
                <label htmlFor="offset-x" className="w-[18px]">X=</label>
                <Spin id="offset-x" value="0" className="w-[58px]" />
                <span className="mx-[2px]">mm</span>
                <label htmlFor="offset-y" className="w-[18px]">Y=</label>
                <Spin id="offset-y" value="0" className="w-[58px]" />
                <span className="mx-[2px]">mm</span>
                <Sep />
                <input id="rotate-on" type="checkbox" className="size-[12px] appearance-none border border-[#999] bg-[#f4f4f4]" />
                <label htmlFor="rotate-on" className="ml-[7px] mr-[5px] text-black">旋转</label>
                <Spin id="rotate-on-value" value="0.000" className="w-[68px]" />
                <label htmlFor="rotate-on-value" className="ml-[2px] pr-1">°</label>
            </Band>
        </div>
    );
}

/* ---------- status bar ---------- */

function StatusCell({ name, value, className }: { name?: string; value: string; className: string }) {
    return (
        <div className={clsx("flex items-center overflow-hidden whitespace-nowrap border border-[#d4d4d4] bg-linear-to-b from-white to-[#f0f0f0] pl-px", className)}>
            {name}
            <span className="font-['Liberation_Mono'] text-[10px]">{value}</span>
        </div>
    );
}

/* ---------- taskbar ---------- */

function TaskIcon({ label, wide, open, current, children }: { label: string; wide?: boolean; open?: boolean; current?: boolean; children: ReactNode }) {
    return (
        <button
            type="button"
            aria-label={label}
            className={clsx(
                "flex h-10 shrink-0 items-center justify-center",
                wide ? "w-[51px]" : "w-[44px]",
                open && "border-b-[3px] border-[#76b9ed] pt-[3px]",
                current && "bg-[#3a4347]"
            )}
        >
            {children}
        </button>
    );
}

const EdgeE = ({ fill }: { fill: string }) => (
    <path d="M1 11C2 4 7 0 13 0c7 0 10 5 10 10v4H9c0 4 3 5 6 5 2 0 5-.6 7-2v5c-3 1.500-6 2-8 2-7 0-10-4-10-9 0-4 2-7 5-8-1 1-2 3-2 4h8c0-4-2-5-5-5-4 0-7 2-9 5z" fill={fill} />
);

function Taskbar() {
    return (
        <footer className="flex h-10 shrink-0 items-stretch bg-[#040c10] text-white">
            <button type="button" aria-label="开始" className="flex w-12 items-center justify-center bg-black">
                <svg width="17" height="17" viewBox="0 0 17 17" fill="#fff">
                    <path d="m0 2.500 7-1V8H0zM8 1.300 17 0v8H8zM0 9h7v6.500l-7-1zM8 9h9v8l-9-1.300z" />
                </svg>
            </button>
            <label className="flex w-[344px] items-center bg-[#333] pl-[8px] pr-[14px]">
                <svg width="23" height="23" viewBox="0 0 23 23" fill="none"><circle cx="11.500" cy="11.500" r="9" stroke="#f4f4f4" strokeWidth="3" /></svg>
                <input aria-label="搜索" placeholder="在这里输入你要搜索的内容" className="ml-[5px] min-w-0 flex-1 bg-transparent text-[14px] outline-none placeholder:text-[#999]" />
                <svg width="12" height="20" viewBox="0 0 12 20" fill="none" stroke="#999">
                    <rect x="3.500" y="1" width="5" height="11" /><path d="M1 9v3q0 3 5 3t5-3V9M6 15v4M3 19h6" />
                </svg>
            </label>
            <button type="button" aria-label="任务视图" className="flex w-[49px] items-center justify-center">
                <svg width="20" height="16" viewBox="0 0 20 16" fill="none" stroke="#f0f0f0" strokeWidth="1.300"><path d="M5 1h10v14H5zM3 3H1v10h2M17 3h2v10h-2" /></svg>
            </button>
            <TaskIcon label="应用中心" wide>
                <svg width="22" height="26" viewBox="0 0 22 26" fill="#e4e4e4">
                    <path d="M10 12V5C9 0 2 0 1 5c0 4 3 4 9 7zM11 11l6-9c5 0 6 6 3 8-2 1-5 1-9 1zM12 14v8c1 5 8 4 9-1 0-4-3-5-9-7zM10 14l-5 9c-5 0-6-6-3-8 2-1 4-1 8-1z" />
                    <path d="M11 10V2c1-2 4-2 5 0zM1 7c0 5 3 5 8 5zM21 18c0-4-3-5-8-5zM11 15v9c-1 2-4 2-5 0z" />
                </svg>
            </TaskIcon>
            <TaskIcon label="浏览器" wide>
                <svg width="25" height="25" viewBox="-1 0 26 26"><EdgeE fill="#e8e8e8" /><path d="M3 24C-3 20 10 3 22 1" stroke="#e8e8e8" strokeWidth="2" fill="none" /></svg>
            </TaskIcon>
            <TaskIcon label="广联达" wide>
                <svg width="22" height="24" viewBox="0 0 22 24" fill="none" stroke="#ccc" strokeWidth="1.300">
                    <path d="M20 1c-6 2-18-1-18 11 0 8 6 11 10 11 5 0 7-4 7-8 0-3-2-5-5-5s-4 2-4 4 2 3 4 2" /><path d="M19 3C12 5 5 4 5 12c0 5 3 8 7 8 3 0 4-1 4-4" />
                </svg>
            </TaskIcon>
            <TaskIcon label="Edge">
                <svg width="21" height="25" viewBox="0 0 24 26"><EdgeE fill="#0b7bd8" /></svg>
            </TaskIcon>
            <TaskIcon label="Internet Explorer">
                <svg width="26" height="27" viewBox="-2 -1 28 28"><EdgeE fill="#39a5ec" /><path d="M2 26C-6 20 12 0 23 2c2 0 1 4 0 5" stroke="#f5cf35" strokeWidth="2.500" fill="none" /></svg>
            </TaskIcon>
            <TaskIcon label="文件资源管理器" open>
                <svg width="22" height="23" viewBox="0 0 22 23"><path d="M0 1h7l2 3h13v18H0z" fill="#f6d977" /><path d="M0 6h22v14H0z" fill="#fde9a0" /><path d="M4 13h14v10h-4v-5H8v5H4z" fill="#3fa9e0" /></svg>
            </TaskIcon>
            <TaskIcon label="GGJ2013" open current>
                <svg width="24" height="30" viewBox="0 0 24 30"><rect width="24" height="30" rx="4" fill="#1590f5" /><path d="M15 10Q13 6 12 9v11q0 3-3 3M5 15h14v3q-1 4-6 4M5 15q0 5 4 5" stroke="#fff" strokeWidth="2" fill="none" /></svg>
            </TaskIcon>
            <TaskIcon label="广联达G+" open>
                <svg width="24" height="30" viewBox="0 0 24 30"><path d="M24 1C16 5 1 1 1 16c0 9 6 13 11 13 7 0 10-5 10-10 0-4-3-7-7-7-4 0-6 3-5 6 1-2 3-3 5-2 2 2 0 6-3 6-3 0-5-3-5-7 0-8 12-6 17-14z" fill="#1b94e8" /><path d="M3 12C5 5 15 6 21 3" stroke="#7cd3ff" fill="none" /></svg>
            </TaskIcon>
            <TaskIcon label="文档编辑" open>
                <svg width="24" height="30" viewBox="0 0 24 30"><rect width="24" height="30" rx="2" fill="#f09a1a" /><path d="M3 5h18v20H3z" fill="#fbe0a8" /><path d="m3 6 12-1 1 19-12 1z" fill="#fff" stroke="#b0651a" /><path d="M6 10h7M6 13h7M6 16h6M6 19h5" stroke="#555" /><path d="M21 4 10 19l-1 4 4-2L23 6z" fill="#c2571a" /></svg>
            </TaskIcon>
            <TaskIcon label="360浏览器" open>
                <svg width="24" height="30" viewBox="0 0 24 30"><ellipse cx="12" cy="15" rx="10" ry="12" fill="#58b832" stroke="#b8ecaa" strokeWidth="2" /><path d="M6 14a6 7 0 0 1 12 0zM6 16h12c0 8-11 8-12 0z" fill="#fff" /><path d="M1 25C-1 17 12 3 22 3" stroke="#e8ffe0" fill="none" /></svg>
            </TaskIcon>
            <div className="flex flex-1 items-center justify-end">
                <span className="mr-[21px]">链接</span>
                <span className="w-[50px] text-center leading-[17px]">28%<br />CPU使用</span>
                <div className="ml-[22px] flex items-center gap-[10px]">
                    <svg width="20" height="18" viewBox="0 0 20 18" fill="none" stroke="#5fd30a" strokeWidth="2.500">
                        <path d="M1 6q9-8 18 0M5 11q5-5 10 0" /><circle cx="10" cy="15" r="1" fill="#5fd30a" />
                    </svg>
                    <svg width="12" height="8" viewBox="0 0 12 8" fill="none" stroke="#fff"><path d="m0 7 6-6 6 6" /></svg>
                    <svg width="17" height="13" viewBox="0 0 17 13" fill="none" stroke="#fff"><path d="M2 0v3M5 0v3M1 3h5v3H1zM3.500 6v5H6M7 3.500h8v7H5M16 5v4" /><path d="M8 5h6v4H8z" fill="#fff" /></svg>
                    <svg width="14" height="14" viewBox="0 0 14 14" fill="none" stroke="#ccc"><path d="M1 14Q1 2 13 1M4 14q0-8 9-9M7 14q0-4 6-5" /><circle cx="12" cy="13" r="1" fill="#fff" /></svg>
                </div>
                <div className="ml-[31px] flex items-center gap-[10px]">
                    <svg width="23" height="14" viewBox="0 0 23 14" fill="none" stroke="#fff"><rect x=".5" y=".5" width="22" height="13" /><path d="M3 4h17M3 7h17" strokeDasharray="2 1" /><path d="M5 10.500h13" /></svg>
                    <span className="text-[13px]">中</span>
                    <span className="flex h-[17px] w-[15px] -rotate-6 items-center justify-center rounded-sm bg-[#ee4a22] text-[14px] font-bold">S</span>
                </div>
                <span className="ml-[17px] w-[60px] text-center leading-[18px]">23:27<br />2018/6/11</span>
                <button type="button" aria-label="通知" className="ml-[18px] mr-[24px]">
                    <svg width="17" height="18" viewBox="0 0 17 18" fill="none" stroke="#fff"><path d="M1 1h15v12h-5l-2.500 3L6 13H1z" /></svg>
                </button>
                <span className="mr-[3px] h-full w-px bg-[#555]" />
            </div>
        </footer>
    );
}

/* ---------- floating widgets ---------- */

function NetWidget() {
    return (
        <div className="absolute left-[666px] top-5 flex h-[51px] w-[120px] items-center rounded-full border border-[#ddd] bg-white pl-[5px] shadow-lg">
            <svg width="38" height="38" viewBox="0 0 38 38" fill="none" stroke="#fff" strokeWidth="3">
                <circle cx="19" cy="19" r="19" fill="#28c76f" stroke="none" />
                <path d="M6 16q13-12 26 0M10 21q9-8 18 0M14 25q5-4 10 0" /><circle cx="19" cy="28" r="1" fill="#fff" />
            </svg>
            <div className="ml-[6px] flex flex-col gap-[6px] text-[11px] text-[#666]">
                <span className="flex h-[14px] items-center gap-[5px]">
                    <svg width="11" height="12" viewBox="0 0 11 12" fill="none" strokeWidth="2"><path d="M4 0v10L1 7" stroke="#28b766" /><path d="M7 12V2l3 3" stroke="#f08030" /></svg>
                    0.00K/s
                </span>
                <span className="flex h-[14px] items-center gap-[6px]">
                    <svg width="10" height="12" viewBox="0 0 10 12" fill="none" stroke="#0dbf72" strokeWidth="1.500"><path d="M1 3h8v8H1zM2 0v3" /><path d="M2 7h6v3H2z" fill="#0dbf72" /></svg>
                    0
                </span>
            </div>
        </div>
    );
}

function ImeBar() {
    return (
        <div className="absolute left-[783px] top-4 flex h-[24px] w-[193px] items-center gap-[7px] border border-[#a9c4de] bg-white pl-[20px] text-[#1c6fc4]">
            <span className="absolute -left-[13px] -top-[2px] flex size-[26px] -rotate-12 items-center justify-center rounded-md bg-[#ee5225] text-[25px] font-bold leading-none text-white">S</span>
            <span className="mr-[2px] text-[14px] font-bold leading-none">英</span>
            <svg width="11" height="12" viewBox="0 0 11 12" fill="#1c6fc4"><circle cx="2.500" cy="3" r="2" /><path d="M7 6h3v3l-2 3H7l1-3H7z" /></svg>
            <svg width="16" height="16" viewBox="0 0 16 16" fill="none" stroke="#1c6fc4" strokeWidth="1.500"><circle cx="8" cy="8" r="7" /><path d="M4 9q4 5 8 0" /><path d="M5.500 4.500v2M10.500 4.500v2" strokeWidth="2" /></svg>
            <svg width="12" height="16" viewBox="0 0 12 16" fill="none" stroke="#1c6fc4" strokeWidth="1.500"><rect x="3.500" y="1" width="5" height="9" rx="2.500" fill="#1c6fc4" /><path d="M1 7q0 5 5 5t5-5M6 12v3M3 15h6" /></svg>
            <svg width="16" height="12" viewBox="0 0 16 12"><rect width="16" height="12" rx="1" fill="#1c6fc4" /><path d="M2 3h12M2 6h12" stroke="#fff" strokeWidth="1.500" strokeDasharray="2 1" /><path d="M4 9h8" stroke="#fff" /></svg>
            <svg width="17" height="15" viewBox="0 0 17 15" fill="#b8c2d0"><circle cx="6" cy="3.500" r="3" /><path d="M0 14q0-6 6-6h3v6z" /><path d="M9 9h3v2H9v3h3M14 9v3h3M16.500 9v5" stroke="#b8c2d0" fill="none" /></svg>
            <svg width="14" height="13" viewBox="0 0 15 13" fill="#1c6fc4"><path d="M4 0q3.500 3 7 0l4 3-2 3-2-1v8H4V5L2 6 0 3z" /></svg>
            <svg width="14" height="14" viewBox="0 0 14 14" fill="#1c6fc4"><path d="M10 0 8 2l1 3 3 .5L14 3c1 4-2 6-5 5l-5 5c-2 2-5-1-3-3l5-5C5 2 7-1 10 0z" /></svg>
        </div>
    );
}

/* ---------- page ---------- */

export default function App() {
    return (
        <div className="relative flex min-h-screen flex-col overflow-hidden bg-[#f0f0f0] font-['Open_Sans','Noto_Sans_CJK_SC',sans-serif] text-[12px] leading-4 text-black">
            <header className="flex h-6 shrink-0 items-center bg-white pl-[2px] pr-5">
                <svg width="16" height="16" viewBox="0 0 16 16" fill="none">
                    <rect width="16" height="16" rx="3" fill="#1590e8" />
                    <path d="M10 5Q9 2.500 8 4v6q0 3-2 3M3 8h10v2q-1 3-4 3M3 8q0 4 3 3.500" stroke="#fff" strokeWidth="1.300" />
                </svg>
                <h1 className="ml-[5px] flex-1 whitespace-nowrap font-['Inter','Noto_Sans_CJK_SC',sans-serif]">
                    广联达BIM钢筋算量软件 GGJ2013 - [C:\Users\Administrator.PC-20141127NRHM\Desktop\白龙村-2018-02-02-19-24-35(2666版).GGJ12]
                </h1>
                <div className="flex items-center gap-[35px]">
                    <button type="button" aria-label="最小化"><svg width="10" height="10" viewBox="0 0 10 10" stroke="#111"><path d="M0 5.500h10" /></svg></button>
                    <button type="button" aria-label="还原"><svg width="10" height="10" viewBox="0 0 10 10" fill="none" stroke="#111"><path d="M.5 2.500h7v7h-7zM2.500 2.500v-2h7v7h-2" /></svg></button>
                    <button type="button" aria-label="关闭"><svg width="10" height="10" viewBox="0 0 10 10" stroke="#111"><path d="m0 0 10 10M10 0 0 10" /></svg></button>
                </div>
            </header>

            <div className="flex h-[30px] shrink-0 items-center">
                <nav className="flex items-center gap-[11px] pl-[9px]">
                    {MENUS.map((m) => <button key={m} type="button" className="whitespace-nowrap">{m}</button>)}
                </nav>
                <Band className="ml-auto h-7 w-[452px] shrink-0 pl-[113px]">
                    <Svg><path d="M1 2h10v12H1z" fill="#fff" stroke="#888" /><circle cx="11" cy="11" r="4.500" fill="#3aa83a" /><path d="m9 11 2 2 3-3" stroke="#fff" /></Svg>
                    <span className="ml-[2px]">新建变更</span>
                    <span className="ml-[19px] flex"><Svg><path d="M2 12q0-6 6-6t6 6l-3 2-3-2-3 2z" fill="#2a8ee8" /></Svg></span>
                    <span className="ml-[2px]">广小二</span>
                    <a href="#tips" className="ml-auto pr-[31px] text-[#5a2c00]">外墙矩形外扩后浇带动..</a>
                </Band>
                <Band className="ml-[2px] h-7 w-[240px] shrink-0 pl-1">
                    <Svg><rect width="16" height="16" rx="2" fill="#3d8fc4" /><circle cx="8" cy="6" r="3" fill="#fff" /><path d="M3 13q0-3 5-3t5 3z" fill="#fff" /></Svg>
                    <span className="ml-1">13907298339</span>
                    <span className="ml-[6px] mr-[9px]"><Caret /></span>
                    <span>造价豆:0</span>
                    <svg width="12" height="15" viewBox="0 0 12 15" className="ml-[10px]" fill="#1f86f0"><path d="M6 0c4 1 4 4 4 8l2 3H0l2-3c0-4 0-7 4-8zM4 12h4l-2 3z" /></svg>
                    <span className="ml-auto mr-[3px] flex self-start"><More /></span>
                </Band>
            </div>

            <div className="flex h-[30px] shrink-0 items-start">
                <Band className="h-7 w-[151px] shrink-0">
                    <Tools items={[{ icon: "newFile", label: "新建" }, { icon: "open", label: "打开", arrow: true }]} />
                    <span className="ml-auto mr-[2px] flex self-start"><More /></span>
                </Band>
                <Band className="ml-[2px] h-7 flex-1">
                    <Tools items={MAIN_TOOLS} />
                    <span className="ml-[50px] flex items-center gap-1">
                        <Icon name="cube" />
                        <Combo label="视图模式" value="三维" className="w-[42px]" />
                    </span>
                    <span className="ml-px flex">
                        <Tools items={VIEW_TOOLS} />
                    </span>
                    <span className="ml-auto mr-[3px] flex self-start"><More /></span>
                </Band>
            </div>

            <div className="flex grow">
                <NavPanel />
                <main className="flex min-w-0 flex-1 flex-col pl-1">
                    <div className="flex h-[26px] shrink-0 items-center pl-px">
                        <Band className="h-[26px] pr-px">
                            <Grip />
                            <Tools items={EDIT_TOOLS} />
                        </Band>
                    </div>
                    <div className="flex h-7 shrink-0 items-center pl-px">
                        <Band className="h-[26px]">
                            <Grip />
                            <span className="flex gap-[2px]">
                                <Combo label="楼层" value="基础层" className="w-[58px]" />
                                <Combo label="构件大类" value="基础" className="w-[70px]" />
                                <Combo label="构件类型" value="筏板基础" className="w-[70px]" />
                                <Combo label="构件" value="FB-3" className="w-[70px]" />
                            </span>
                            <Sep />
                            <Tools items={COMPONENT_TOOLS} />
                        </Band>
                        <Band className="ml-auto mr-[43px] h-[26px]">
                            <Grip />
                            <Tools
                                items={[
                                    { icon: "twoPoint", label: "两点" },
                                    { icon: "parallel", label: "平行" },
                                    { icon: "pointAngle", label: "点角", arrow: true },
                                ]}
                            />
                            <span className="flex border border-[#1079d0] bg-[#b3d7f3]">
                                <Tool icon="threeAxis" label="三点辅轴" />
                                <button type="button" aria-label="三点辅轴选项" className="flex w-3 items-center justify-center border-l border-[#1079d0]"><Caret /></button>
                            </span>
                            <Tools items={[{ icon: "eraser", label: "删除辅轴" }, { icon: "dim", label: "尺寸标注", arrow: true }]} />
                        </Band>
                    </div>
                    <div className="flex h-[30px] shrink-0 items-center pl-px">
                        <Band className="h-7 flex-1">
                            <Grip />
                            <Tools items={DRAW_TOOLS} />
                            <Combo label="绘制参数" value="" className="ml-[3px] mr-[2px] w-[55px]" />
                            <Tools items={SLAB_TOOLS} />
                            <span className="ml-auto flex self-start"><More /></span>
                        </Band>
                        <Band className="ml-[3px] h-7 w-[33px]"><Grip /></Band>
                    </div>
                    <div className="min-h-0 grow basis-[507px] pr-px">
                        <div className="h-0 min-h-full overflow-hidden bg-black">
                            <ModelView />
                        </div>
                    </div>
                    <SnapBar />
                </main>
            </div>

            <div className="flex h-[22px] shrink-0 gap-[2px] border-t border-white py-px">
                <StatusCell value="X=519215 Y=35152" className="w-[148px]" />
                <StatusCell name="层高" value=":2.15m" className="w-[78px]" />
                <StatusCell name="底标高" value=":-2.2m" className="w-[99px]" />
                <StatusCell value="0" className="w-[48px]" />
                <StatusCell value="" className="flex-1" />
                <StatusCell value="233.1 FPS" className="w-[70px]" />
            </div>

            <Taskbar />

            <NetWidget />
            <ImeBar />
            <div className="absolute left-[1132px] top-[-27px] flex size-[46px] items-end justify-center rounded-full border-2 border-[#c9cfc9] bg-[#3fc25a] pb-px font-bold text-white shadow-md">72</div>
        </div>
    );
}
